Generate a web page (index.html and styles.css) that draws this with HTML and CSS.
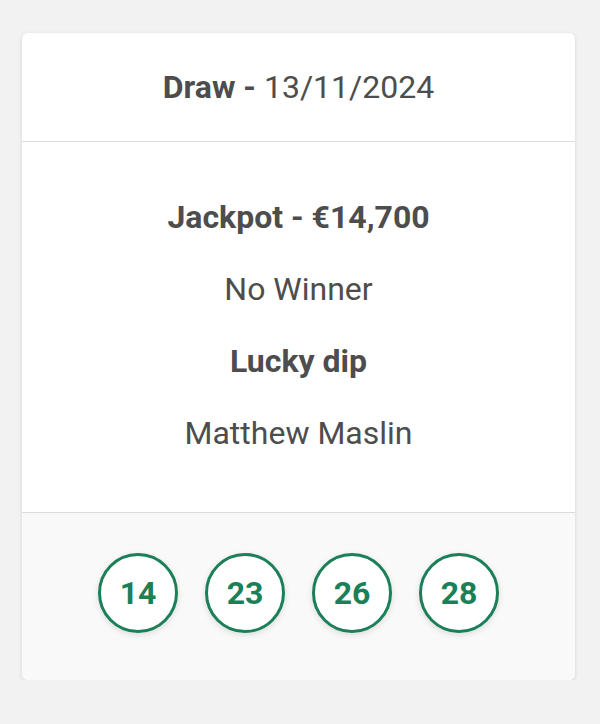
FILE: index.html
```html
<!DOCTYPE html>
<html lang="en">
<head>
    <meta charset="UTF-8">
    <meta name="viewport" content="width=device-width, initial-scale=1.0">
    <title>Draw Result</title>
    <link rel="stylesheet" href="styles.css">
</head>
<body>
    <section class="card">
        <header class="cardHeader">
            <h2 class="drawTitle"><strong>Draw -</strong> 13/11/2024</h2>
        </header>
        <div class="cardBody">
            <p class="line bold">Jackpot - €14,700</p>
            <p class="line">No Winner</p>
            <p class="line bold">Lucky dip</p>
            <p class="line">Matthew Maslin</p>
        </div>
        <div class="cardFooter">
            <span class="ball">14</span>
            <span class="ball">23</span>
            <span class="ball">26</span>
            <span class="ball">28</span>
        </div>
    </section>
</body>
</html>
```

FILE: styles.css
```css
* {
    margin: 0;
    padding: 0;
    box-sizing: border-box;
}

body {
    font-family: Roboto, "Liberation Sans", sans-serif;
    background-color: #f2f2f2;
    color: #4d4d4d;
    padding: 33px 25px 0 22px;
}

.card {
    background-color: #fff;
    border-radius: 6px;
    box-shadow: 0 1px 4px rgba(0, 0, 0, 0.12);
    overflow: hidden;
}

.cardHeader {
    height: 109px;
    display: flex;
    align-items: center;
    justify-content: center;
    border-bottom: 1px solid #dcdcdc;
}

.drawTitle {
    font-size: 32px;
    font-weight: 400;
}

.drawTitle strong {
    font-weight: 700;
}

.cardBody {
    height: 371px;
    padding-top: 39px;
    text-align: center;
    border-bottom: 1px solid #dcdcdc;
}

.line {
    font-size: 32px;
    line-height: 72px;
}

.bold {
    font-weight: 700;
}

.cardFooter {
    height: 167px;
    background-color: #f9f9f9;
    display: flex;
    justify-content: center;
    align-items: center;
    gap: 27px;
    padding-bottom: 8px;
}

.ball {
    width: 80px;
    height: 80px;
    border: 3px solid #1b7f57;
    border-radius: 50%;
    background-color: #fff;
    color: #1b7f57;
    font-size: 32px;
    font-weight: 700;
    display: flex;
    align-items: center;
    justify-content: center;
    box-shadow: 0 2px 6px rgba(0, 0, 0, 0.12);
}
```
